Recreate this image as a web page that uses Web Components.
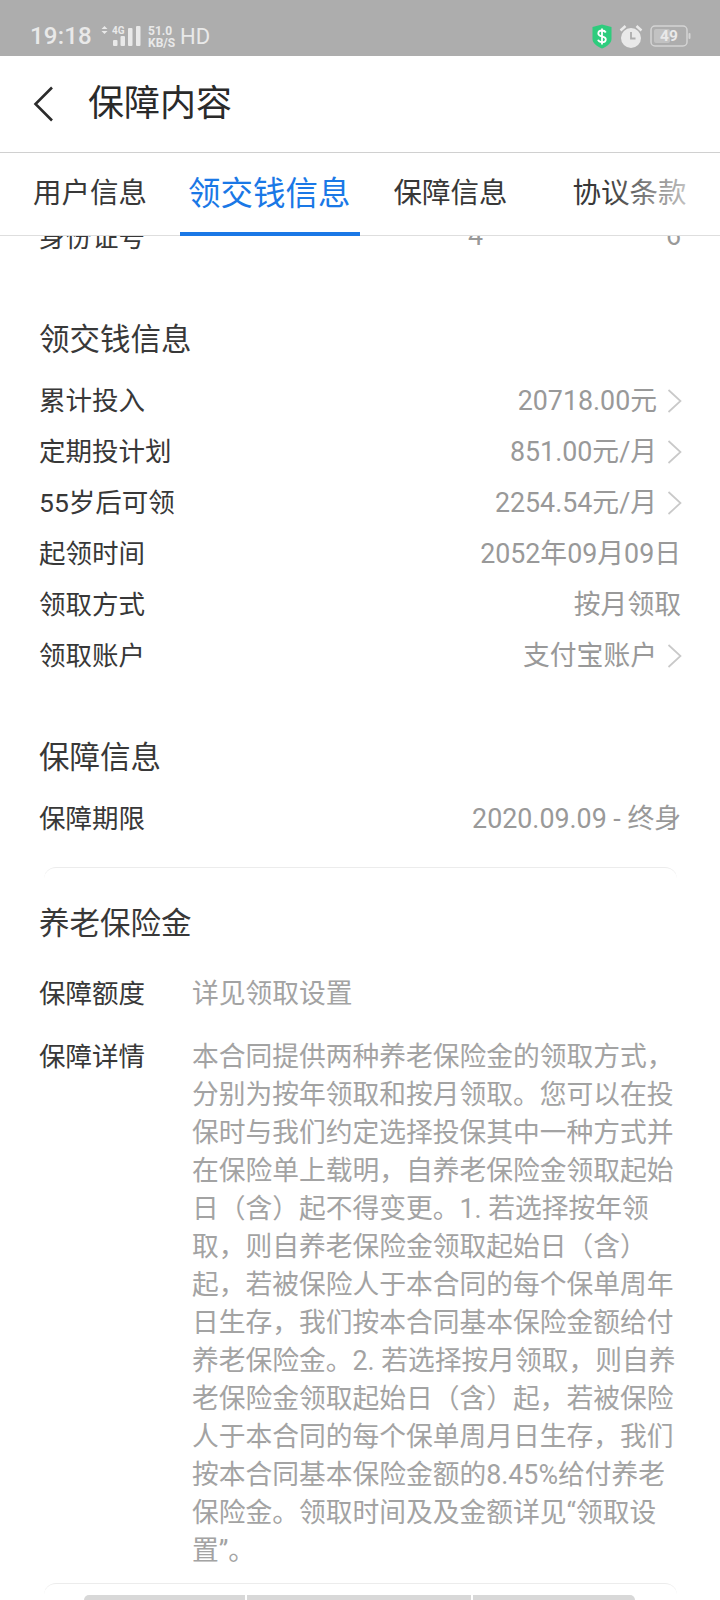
<!DOCTYPE html>
<html lang="zh">
<head>
<meta charset="utf-8">
<title>保障内容</title>
<style>
  html, body { margin: 0; padding: 0; background: #fff; }
  body {
    width: 720px; height: 1600px; overflow: hidden;
    display: flex; flex-direction: column;
    font-family: Roboto, "Noto Sans CJK SC", sans-serif;
  }
</style>
</head>
<body>
<status-bar></status-bar>
<page-header>保障内容</page-header>
<tab-bar>
  <tab-item>用户信息</tab-item>
  <tab-item active>领交钱信息</tab-item>
  <tab-item>保障信息</tab-item>
  <tab-item last>协议条款</tab-item>
</tab-bar>
<page-body>
  <info-row label="身份证号" spread><span>4</span><span>6</span></info-row>

  <info-section heading="领交钱信息">
    <info-row label="累计投入" arrow>20718.00元</info-row>
    <info-row label="定期投计划" arrow>851.00元/月</info-row>
    <info-row label="55岁后可领" arrow>2254.54元/月</info-row>
    <info-row label="起领时间">2052年09月09日</info-row>
    <info-row label="领取方式">按月领取</info-row>
    <info-row label="领取账户" arrow>支付宝账户</info-row>
  </info-section>

  <info-section heading="保障信息">
    <info-row label="保障期限">2020.09.09 - 终身</info-row>
  </info-section>

  <benefit-card heading="养老保险金">
    <detail-row label="保障额度" short>详见领取设置</detail-row>
    <detail-row label="保障详情">本合同提供两种养老保险金的领取方式，分别为按年领取和按月领取。您可以在投保时与我们约定选择投保其中一种方式并在保险单上载明，自养老保险金领取起始日（含）起不得变更。1. 若选择按年领取，则自养老保险金领取起始日（含）起，若被保险人于本合同的每个保单周年日生存，我们按本合同基本保险金额给付养老保险金。2. 若选择按月领取，则自养老保险金领取起始日（含）起，若被保险人于本合同的每个保单周月日生存，我们按本合同基本保险金额的8.45%给付养老保险金。领取时间及及金额详见“领取设置”。</detail-row>
  </benefit-card>

  <next-card></next-card>
</page-body>

<script>
// small helper, every element just sets its shadow html once
class Base extends HTMLElement {
  constructor() {
    super();
    this.attachShadow({ mode: 'open' });
  }
}

class StatusBar extends Base {
  connectedCallback() {
    this.shadowRoot.innerHTML = `
      <style>
        :host { display: flex; align-items: center; height: 56px; flex: none; background: #adadad; color: #e9e9e9; padding: 16px 29px 0 30px; box-sizing: border-box; font-family: Roboto, sans-serif; }
        .time { font-size: 24px; letter-spacing: .2px; font-weight: 500; width: 71px; white-space: nowrap; }
        svg { display: block; flex: none; }
        .speed { width: 32px; margin-left: 6px; font-size: 12px; line-height: 12px; font-weight: 700; text-align: left; padding-top: 1px; }
        .speed div { height: 11px; }
        .hd { font-size: 22px; padding-top: 1px; }
        .right { margin-left: auto; display: flex; align-items: center; gap: 6px; }
        .batt { position: relative; width: 41px; height: 22px; }
        .batt span { position: absolute; left: 1px; right: 4px; top: 0; text-align: center; font-size: 15.500px; font-weight: 700; line-height: 22px; color: #e9e9e9; }
      </style>
      <div class="time">19:18</div>
      <svg width="41" height="22" viewBox="0 0 41 22" fill="#e9e9e9">
        <path d="M3.500 1 6.500 4H.5zM3.500 9 .5 6h6z"/>
        <text x="11" y="9" font-size="10" font-weight="700" font-family="Roboto, sans-serif">4G</text>
        <rect x="12" y="15" width="4.500" height="6" rx="1"/>
        <rect x="19.500" y="11" width="4.500" height="10" rx="1"/>
        <rect x="27" y="3" width="4.500" height="18" rx="1"/>
        <rect x="35" y="1" width="4.500" height="20" rx="1"/>
      </svg>
      <div class="speed">51.0<br>KB/S</div>
      <div class="hd">HD</div>
      <div class="right">
        <svg width="20" height="25" viewBox="0 0 20 25">
          <path d="M10 .5 19.500 3v12c0 4-4.500 7.500-9.500 9.500C5 22.500.5 19 .5 15V3z" fill="#2ecc7d"/>
          <path d="M13.800 8.500C13 7 11.500 6.500 10 6.500c-2 0-3.700 1-3.700 2.900 0 3.900 7.500 2 7.500 5.800 0 2-1.800 3-3.800 3-1.800 0-3.400-.8-4-2.400M10 4.500v16" fill="none" stroke="#fff" stroke-width="1.800"/>
        </svg>
        <svg width="26" height="25" viewBox="0 0 25 25">
          <circle cx="12.500" cy="14" r="10" fill="#e9e9e9"/>
          <path d="M12.500 8v6.500h4.500" fill="none" stroke="#adadad" stroke-width="1.800"/>
          <path d="M2 6.500 7 2M23 6.500 18 2" fill="none" stroke="#e9e9e9" stroke-width="2.500"/>
        </svg>
        <div class="batt">
          <svg width="41" height="22" viewBox="0 0 41 22">
            <rect x="1" y="1" width="36" height="20" rx="4" fill="none" stroke="#d4d4d4" stroke-width="1.500"/>
            <rect x="4" y="4" width="16" height="14" rx="2" fill="#c2c2c2"/>
            <rect x="38.500" y="8" width="2" height="6" rx="1" fill="#d4d4d4"/>
          </svg>
          <span>49</span>
        </div>
      </div>`;
  }
}

class PageHeader extends Base {
  connectedCallback() {
    this.shadowRoot.innerHTML = `
      <style>
        :host { display: flex; align-items: center; flex: none; height: 97px; box-sizing: border-box; border-bottom: 1px solid #d0d0d0; padding: 0 0 1px 33px; background: #fff; }
        svg { display: block; flex: none; margin-right: 35px; }
        .title { font-size: 36px; line-height: 44px; color: #2a2a2a; font-family: Roboto, "Noto Sans CJK SC", sans-serif; }
      </style>
      <svg width="20" height="36" viewBox="0 0 20 36"><path d="M19 1.500 2.500 18 19 34.500" fill="none" stroke="#2b2b2b" stroke-width="2.600"/></svg>
      <div class="title"><slot></slot></div>`;
  }
}

class TabBar extends Base {
  connectedCallback() {
    this.shadowRoot.innerHTML = `
      <style>
        :host { display: flex; flex: none; position: relative; height: 83px; box-sizing: border-box; border-bottom: 1px solid #dedede; padding-left: 33px; gap: 33px; background: #fff; z-index: 2; }
        .fade { position: absolute; right: 30px; top: 0; bottom: 0; width: 85px; background: linear-gradient(to right, rgba(255,255,255,0), rgba(255,255,255,.72)); pointer-events: none; }
      </style>
      <slot></slot>
      <div class="fade"></div>`;
  }
}

class TabItem extends Base {
  connectedCallback() {
    const on = this.hasAttribute('active');
    this.shadowRoot.innerHTML = `
      <style>
        :host { display: block; height: 83px; box-sizing: border-box; font-size: ${on ? 32.500 : 28.500}px; color: ${on ? '#1a78e6' : '#383838'}; line-height: 82px; white-space: nowrap; ${on ? 'padding: 0 9px 0 8px; margin-right: 1px; border-bottom: 4px solid #1a78e6;' : ''} ${this.hasAttribute('last') ? 'margin-left: 32px;' : ''} font-family: Roboto, "Noto Sans CJK SC", sans-serif; }
      </style>
      <slot></slot>`;
  }
}

class PageBody extends Base {
  connectedCallback() {
    this.shadowRoot.innerHTML = `
      <style>
        :host { display: block; flex: 1; min-height: 0; overflow: hidden; padding: 0 39px; background: #fff; }
        .inner { margin-top: -26px; }
      </style>
      <div class="inner"><slot></slot></div>`;
  }
}

class InfoSection extends Base {
  connectedCallback() {
    this.shadowRoot.innerHTML = `
      <style>
        :host { display: block; margin-top: 59px; }
        h2 { margin: 0 0 13px; font-size: 30.500px; line-height: 40px; font-weight: 400; color: #383838; font-family: Roboto, "Noto Sans CJK SC", sans-serif; }
      </style>
      <h2>${this.getAttribute('heading')}</h2>
      <slot></slot>`;
  }
}

class InfoRow extends Base {
  connectedCallback() {
    const arrow = this.hasAttribute('arrow');
    const spread = this.hasAttribute('spread');
    this.shadowRoot.innerHTML = `
      <style>
        :host { display: flex; align-items: center; height: 51px; font-size: 26.500px; font-family: Roboto, "Noto Sans CJK SC", sans-serif; }
        .label { color: #383838; flex: none; }
        .value { margin-left: auto; color: #999; font-size: 26.800px; white-space: nowrap; ${spread ? 'display: flex; justify-content: space-between; width: 213px;' : ''} }
        svg { display: block; flex: none; margin-left: 10px; margin-right: -1px; position: relative; top: 2px; }
      </style>
      <div class="label">${this.getAttribute('label')}</div>
      <div class="value"><slot></slot></div>
      ${arrow ? '<svg width="15" height="24" viewBox="0 0 15 24"><path d="M1.500 1 13.500 12 1.500 23" fill="none" stroke="#c9c9c9" stroke-width="1.700"/></svg>' : ''}`;
  }
}

class BenefitCard extends Base {
  connectedCallback() {
    this.shadowRoot.innerHTML = `
      <style>
        :host { display: block; margin-top: 25px; }
        .line { margin: 0 4px 0 5px; height: 36px; border-top: 1px solid #ececec; border-radius: 12px 12px 0 0; }
        h2 { margin: 0 0 25px; font-size: 30.500px; line-height: 40px; font-weight: 400; color: #383838; font-family: Roboto, "Noto Sans CJK SC", sans-serif; }
      </style>
      <div class="line"></div>
      <h2>${this.getAttribute('heading')}</h2>
      <slot></slot>`;
  }
}

class DetailRow extends Base {
  connectedCallback() {
    const short = this.hasAttribute('short');
    this.shadowRoot.innerHTML = `
      <style>
        :host { display: grid; grid-template-columns: 153px 1fr; font-size: 26.500px; line-height: 38px; margin-bottom: ${short ? 25 : 0}px; padding-top: ${short ? 6 : 0}px; font-family: Roboto, "Noto Sans CJK SC", sans-serif; }
        .label { color: #383838; }
        .text { color: #a3a3a3; width: 490px; font-size: 26.750px; }
      </style>
      <div class="label">${this.getAttribute('label')}</div>
      <div class="text"><slot></slot></div>`;
  }
}

// only the top edge of the next card shows, with its loading bars
class NextCard extends Base {
  connectedCallback() {
    this.shadowRoot.innerHTML = `
      <style>
        :host { display: block; margin: 13px 4px 0 5px; height: 40px; border-top: 1px solid #ececec; border-radius: 12px 12px 0 0; }
        .bars { display: grid; grid-template-columns: 161px 224px 162px; gap: 2px; margin: 11px 0 0 40px; }
        .bars div { height: 12px; background: #d8d8d8; }
        .bars div:first-child { border-radius: 5px 0 0 0; }
        .bars div:last-child { border-radius: 0 5px 0 0; }
      </style>
      <div class="bars"><div></div><div></div><div></div></div>`;
  }
}

customElements.define('status-bar', StatusBar);
customElements.define('page-header', PageHeader);
customElements.define('tab-bar', TabBar);
customElements.define('tab-item', TabItem);
customElements.define('page-body', PageBody);
customElements.define('info-section', InfoSection);
customElements.define('info-row', InfoRow);
customElements.define('benefit-card', BenefitCard);
customElements.define('detail-row', DetailRow);
customElements.define('next-card', NextCard);
</script>
</body>
</html>
